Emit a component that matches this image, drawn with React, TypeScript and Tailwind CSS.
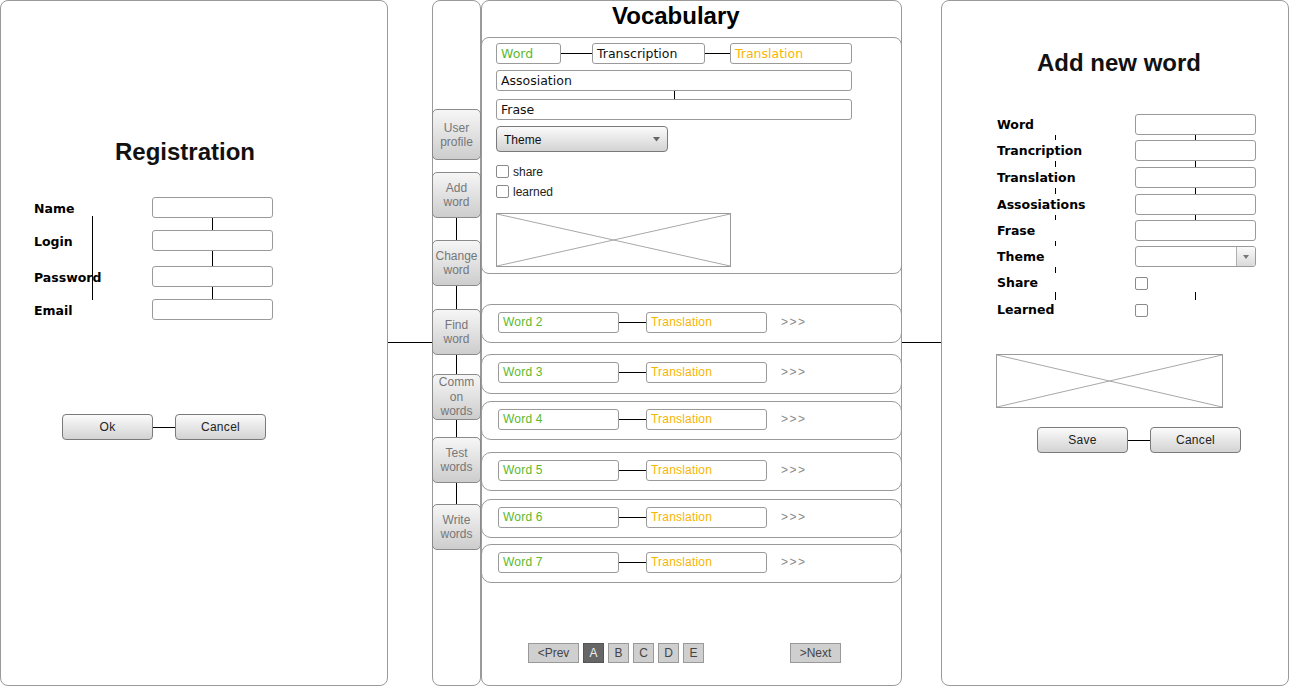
import React from "react";

const SANS = "font-['Liberation_Sans',Arial,sans-serif]";
const DV = "font-['DejaVu_Sans',sans-serif]";

function Btn({ children, className = "" }: { children: React.ReactNode; className?: string }) {
  return (
    <div
      className={`flex shrink-0 items-center justify-center rounded-[4px] border border-[#7a7a7a] bg-linear-to-b from-[#fbfbfb] to-[#d3d3d3] text-[12px] tracking-[0.3px] text-[#222] ${className}`}
    >
      {children}
    </div>
  );
}

function Placeholder({ className = "" }: { className?: string }) {
  return (
    <div className={`shrink-0 border border-[#9a9a9a] bg-white ${className}`}>
      <svg className="block h-full w-full" viewBox="0 0 100 100" preserveAspectRatio="none">
        <line x1="0" y1="0" x2="100" y2="100" stroke="#a8a8a8" strokeWidth="1" vectorEffect="non-scaling-stroke" />
        <line x1="0" y1="100" x2="100" y2="0" stroke="#a8a8a8" strokeWidth="1" vectorEffect="non-scaling-stroke" />
      </svg>
    </div>
  );
}

function Check() {
  return <div className="h-[13px] w-[13px] shrink-0 rounded-[2px] border border-[#8a8a8a] bg-white" />;
}

function SideBtn({ children, h }: { children: React.ReactNode; h: string }) {
  return (
    <div
      className={`-mx-px flex items-center justify-center rounded-[5px] border border-[#8a8a8a] bg-linear-to-b from-[#f6f6f6] to-[#cdcdcd] text-center text-[12px] leading-[14px] text-[#777] ${h}`}
    >
      <div>{children}</div>
    </div>
  );
}

function SideGap({ h, line }: { h: string; line: boolean }) {
  return <div className={`flex justify-center ${h}`}>{line && <div className="h-full w-px bg-black" />}</div>;
}

function WordRow({ n, h, mt }: { n: number; h: string; mt: string }) {
  return (
    <div className={`-mx-px flex items-start rounded-[10px] border border-[#9a9a9a] pl-[16px] pt-[7px] ${h} ${mt}`}>
      <div className="flex h-[21px] items-center">
        <div className="flex h-[21px] w-[121px] items-center rounded-[3px] border border-[#9a9a9a] pb-px pl-[4px] text-[12px] tracking-[0.2px] text-[#5cb92e]">
          Word {n}
        </div>
        <div className="h-px w-[27px] bg-black" />
        <div className="flex h-[21px] w-[121px] items-center rounded-[3px] border border-[#9a9a9a] pb-px pl-[4px] text-[12px] tracking-[0.2px] text-[#f8b500]">
          Translation
        </div>
        <div className="ml-[14px] pb-px text-[12px] tracking-[1.5px] text-[#888]">&gt;&gt;&gt;</div>
      </div>
    </div>
  );
}

function PageBtn({ children, active = false, w = "w-[21px]" }: { children: React.ReactNode; active?: boolean; w?: string }) {
  return (
    <div
      className={`flex h-[20px] shrink-0 items-center justify-center border text-[12px] ${w} ${
        active ? "border-[#555] bg-[#666] text-[#eee]" : "border-[#999] bg-[#cfcfcf] text-[#444]"
      }`}
    >
      {children}
    </div>
  );
}

function RegRow({ label }: { label: string }) {
  return (
    <div className="flex h-[21px] items-center">
      <div className={`w-[151px] pl-[33px] pt-[4px] text-[12.5px] font-bold text-black ${DV}`}>{label}</div>
      <div className="h-[21px] w-[121px] rounded-[3px] border border-[#9a9a9a] bg-white" />
    </div>
  );
}

function RegGap({ h }: { h: string }) {
  return (
    <div className={`flex ${h}`}>
      <div className="ml-[211px] h-full w-px bg-black" />
    </div>
  );
}

function AddRow({ label, children }: { label: string; children: React.ReactNode }) {
  return (
    <div className="flex items-center">
      <div className={`w-[193px] pl-[55px] text-[12.5px] leading-[14px] font-bold text-black ${DV}`}>{label}</div>
      {children}
    </div>
  );
}

function AddInput() {
  return <div className="h-[21px] w-[121px] rounded-[3px] border border-[#9a9a9a] bg-white" />;
}

function AddGap({ h, left = true, right = true, dash, align = "items-stretch" }: { h: string; left?: boolean; right?: boolean; dash?: string; align?: string }) {
  const d = dash ?? "h-full";
  return (
    <div className={`relative flex ${h} ${align}`}>
      <div className={`ml-[113px] w-px ${d} ${left ? "bg-black" : "bg-transparent"}`} />
      <div className={`ml-[139px] w-px ${d} ${right ? "bg-black" : "bg-transparent"}`} />
    </div>
  );
}

export default function App() {
  return (
    <div className={`flex h-[686px] w-[1289px] overflow-hidden bg-white text-black ${SANS}`}>
      {/* Registration panel */}
      <div className="relative flex h-[686px] w-[388px] shrink-0 flex-col rounded-[8px] border border-[#9a9a9a]">
        <div className="mt-[137px] h-[28px] pl-[114px] text-[24px] leading-[28px] font-bold text-[#111]">Registration</div>
        <div className="mt-[31px] flex flex-col">
          <RegRow label="Name" />
          <RegGap h="h-[12px]" />
          <RegRow label="Login" />
          <RegGap h="h-[15px]" />
          <RegRow label="Password" />
          <RegGap h="h-[12px]" />
          <RegRow label="Email" />
        </div>
        <div className="absolute left-[91px] top-[215px] h-[84px] w-px bg-black" />
        <div className="mt-[94px] flex items-center pl-[61px]">
          <Btn className="h-[26px] w-[91px]">Ok</Btn>
          <div className="h-px w-[22px] bg-black" />
          <Btn className="h-[26px] w-[91px]">Cancel</Btn>
        </div>
      </div>

      {/* connector */}
      <div className="w-[44px] shrink-0">
        <div className="mt-[342px] h-px w-full bg-black" />
      </div>

      {/* Sidebar */}
      <div className="flex h-[686px] w-[49px] shrink-0 flex-col rounded-[8px] border border-[#9a9a9a]">
        <div className="h-[108px]" />
        <SideBtn h="h-[51px]">
          User
          <br />
          profile
        </SideBtn>
        <SideGap h="h-[12px]" line={false} />
        <SideBtn h="h-[46px]">
          Add
          <br />
          word
        </SideBtn>
        <SideGap h="h-[22px]" line />
        <SideBtn h="h-[46px]">
          Change
          <br />
          word
        </SideBtn>
        <SideGap h="h-[23px]" line />
        <SideBtn h="h-[46px]">
          Find
          <br />
          word
        </SideBtn>
        <SideGap h="h-[19px]" line />
        <SideBtn h="h-[46px]">
          <span className="leading-[13.5px]">
            Comm
            <br />
            on
            <br />
            words
          </span>
        </SideBtn>
        <SideGap h="h-[17px]" line />
        <SideBtn h="h-[46px]">
          Test
          <br />
          words
        </SideBtn>
        <SideGap h="h-[21px]" line />
        <SideBtn h="h-[46px]">
          Write
          <br />
          words
        </SideBtn>
      </div>

      {/* Vocabulary panel */}
      <div className="flex h-[686px] w-[421px] shrink-0 flex-col rounded-[8px] border border-[#9a9a9a]">
        <div className="h-[36px] pl-[130px] pt-px text-[24px] leading-[28px] font-bold">Vocabulary</div>
        <div className="-mx-px flex h-[237px] flex-col rounded-[8px] border border-[#9a9a9a] pl-[14px]">
          <div className={`mt-[5px] flex h-[21px] items-center text-[12.5px] ${DV}`}>
            <div className="flex h-[21px] w-[65px] items-center rounded-[3px] border border-[#9a9a9a] pl-[4px] pt-px text-[#5cb92e]">
              Word
            </div>
            <div className="h-px w-[31px] bg-black" />
            <div className="flex h-[21px] w-[113px] items-center rounded-[3px] border border-[#9a9a9a] pl-[4px] pt-px text-[#111]">
              Transcription
            </div>
            <div className="h-px w-[25px] bg-black" />
            <div className="flex h-[21px] w-[122px] items-center rounded-[3px] border border-[#9a9a9a] pl-[4px] pt-px text-[#f8b500]">
              Translation
            </div>
          </div>
          <div className={`mt-[6px] flex h-[21px] w-[356px] items-center rounded-[3px] border border-[#9a9a9a] pl-[4px] pt-px text-[12.5px] text-[#111] ${DV}`}>
            Assosiation
          </div>
          <div className="flex h-[8px]">
            <div className="ml-[178px] h-full w-px bg-black" />
          </div>
          <div className={`flex h-[21px] w-[356px] items-center rounded-[3px] border border-[#9a9a9a] pl-[4px] pt-px text-[12.5px] text-[#111] ${DV}`}>
            Frase
          </div>
          <div className="mt-[6px] flex h-[26px] w-[172px] items-center justify-between rounded-[4px] border border-[#7a7a7a] bg-linear-to-b from-[#fbfbfb] to-[#d3d3d3] pl-[7px] pr-[7px] pt-px text-[12px] text-[#111]">
            <span>Theme</span>
            <svg width="7" height="5" viewBox="0 0 7 5">
              <path d="M0 0 L7 0 L3.5 4.5 Z" fill="#666" />
            </svg>
          </div>
          <div className="mt-[13px] flex h-[13px] items-center">
            <Check />
            <span className="ml-[4px] text-[12px] text-[#222]">share</span>
          </div>
          <div className="mt-[7px] flex h-[13px] items-center">
            <Check />
            <span className="ml-[4px] text-[12px] text-[#222]">learned</span>
          </div>
          <Placeholder className="mt-[15px] h-[54px] w-[235px]" />
        </div>

        <WordRow n={2} h="h-[39px]" mt="mt-[30px]" />
        <WordRow n={3} h="h-[40px]" mt="mt-[11px]" />
        <WordRow n={4} h="h-[39px]" mt="mt-[7px]" />
        <WordRow n={5} h="h-[39px]" mt="mt-[12px]" />
        <WordRow n={6} h="h-[39px]" mt="mt-[8px]" />
        <WordRow n={7} h="h-[39px]" mt="mt-[6px]" />

        <div className="mt-[60px] flex items-center pl-[46px]">
          <PageBtn w="w-[51px]">&lt;Prev</PageBtn>
          <div className="ml-[4px] flex gap-[4px]">
            <PageBtn active>A</PageBtn>
            <PageBtn>B</PageBtn>
            <PageBtn>C</PageBtn>
            <PageBtn>D</PageBtn>
            <PageBtn>E</PageBtn>
          </div>
          <div className="ml-[86px]">
            <PageBtn w="w-[51px]">&gt;Next</PageBtn>
          </div>
        </div>
      </div>

      {/* connector */}
      <div className="w-[39px] shrink-0">
        <div className="mt-[342px] h-px w-full bg-black" />
      </div>

      {/* Add new word panel */}
      <div className="flex h-[686px] w-[348px] shrink-0 flex-col rounded-[8px] border border-[#9a9a9a]">
        <div className="mt-[48px] h-[28px] pl-[95px] text-[24px] leading-[28px] font-bold text-[#111]">Add new word</div>
        <div className="mt-[37px] flex flex-col">
          <AddRow label="Word">
            <AddInput />
          </AddRow>
          <AddGap h="h-[5px]" />
          <AddRow label="Trancription">
            <AddInput />
          </AddRow>
          <AddGap h="h-[6px]" />
          <AddRow label="Translation">
            <AddInput />
          </AddRow>
          <AddGap h="h-[6px]" />
          <AddRow label="Assosiations">
            <AddInput />
          </AddRow>
          <AddGap h="h-[5px]" />
          <AddRow label="Frase">
            <AddInput />
          </AddRow>
          <AddGap h="h-[5px]" right={false} />
          <AddRow label="Theme">
            <div className="flex h-[21px] w-[121px] justify-end rounded-[3px] border border-[#9a9a9a] bg-white">
              <div className="flex w-[19px] items-center justify-center rounded-r-[2px] border-l border-[#b0b0b0] bg-linear-to-b from-[#fafafa] to-[#dadada]">
                <svg width="6" height="4" viewBox="0 0 6 4">
                  <path d="M0 0 L6 0 L3 4 Z" fill="#777" />
                </svg>
              </div>
            </div>
          </AddRow>
          <AddGap h="h-[9px]" right={false} dash="h-[6px]" align="items-start" />
          <div className="h-[13px]">
            <AddRow label="Share">
              <Check />
            </AddRow>
          </div>
          <AddGap h="h-[14px]" dash="h-[8px]" align="items-center" />
          <div className="h-[13px]">
            <AddRow label="Learned">
              <Check />
            </AddRow>
          </div>
        </div>
        <Placeholder className="ml-[54px] mt-[38px] h-[54px] w-[227px]" />
        <div className="mt-[19px] flex items-center pl-[95px]">
          <Btn className="h-[26px] w-[91px]">Save</Btn>
          <div className="h-px w-[22px] bg-black" />
          <Btn className="h-[26px] w-[91px]">Cancel</Btn>
        </div>
      </div>
    </div>
  );
}
